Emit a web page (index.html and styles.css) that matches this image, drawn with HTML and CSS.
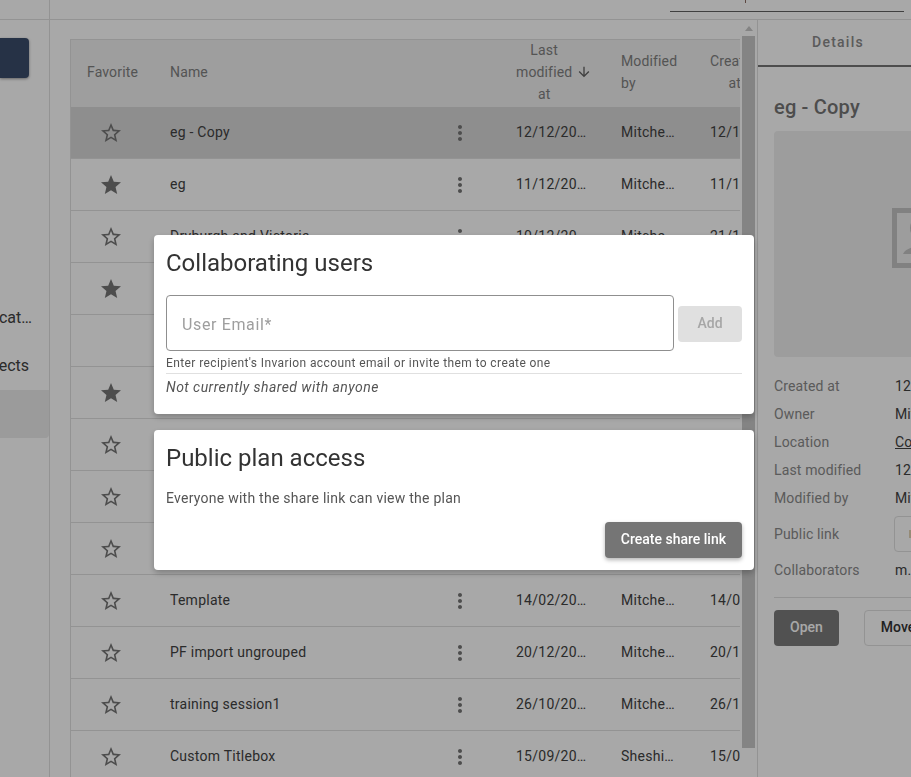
FILE: index.html
```html
<!DOCTYPE html>
<html lang="en">
<head>
  <meta charset="UTF-8" />
  <meta name="viewport" content="width=device-width, initial-scale=1" />
  <title>Plans</title>
  <link rel="stylesheet" href="styles.css">
</head>
<body>
  <svg class="icon-defs" aria-hidden="true">
    <symbol id="star" viewBox="0 0 24 24"><path d="M12 17.27L18.18 21l-1.64-7.03L22 9.24l-7.19-.61L12 2 9.19 8.63 2 9.24l5.46 4.73L5.82 21z"/></symbol>
    <symbol id="star-border" viewBox="0 0 24 24"><path d="M22 9.24l-7.19-.62L12 2 9.19 8.63 2 9.24l5.46 4.73L5.82 21 12 17.27 18.18 21l-1.63-7.03L22 9.24zM12 15.4l-3.76 2.27 1-4.28-3.32-2.88 4.38-.38L12 6.1l1.71 4.04 4.38.38-3.32 2.88 1 4.28L12 15.4z"/></symbol>
    <symbol id="more" viewBox="0 0 24 24"><path d="M12 8c1.1 0 2-.9 2-2s-.9-2-2-2-2 .9-2 2 .9 2 2 2zm0 2c-1.1 0-2 .9-2 2s.9 2 2 2 2-.9 2-2-.9-2-2-2zm0 6c-1.1 0-2 .9-2 2s.9 2 2 2 2-.9 2-2-.9-2-2-2z"/></symbol>
  </svg>

  <header class="topbar">
    <div class="topbar-side"></div>
    <div class="topbar-main">
      <div class="search-field"><span class="search-mark"></span></div>
    </div>
  </header>

  <div class="main">
    <nav class="sidebar">
      <div class="new-button"></div>
      <div class="side-item">Applicat…</div>
      <div class="side-item projects">Shared projects</div>
      <div class="side-item selected"></div>
    </nav>

    <section class="content">
      <div class="table-wrap">
        <table class="plans">
          <colgroup>
            <col class="col-fav"><col class="col-name"><col class="col-menu"><col class="col-last"><col class="col-by"><col class="col-created">
          </colgroup>
          <thead>
            <tr>
              <th>Favorite</th>
              <th>Name</th>
              <th></th>
              <th>
                <div class="sort-head">
                  <span class="stack center">Last modified at</span>
                  <svg class="sort-arrow" viewBox="0 0 24 24"><path d="M20 12l-1.41-1.41L13 16.17V4h-2v12.17l-5.58-5.59L4 12l8 8 8-8z"/></svg>
                </div>
              </th>
              <th><span class="stack">Modified by</span></th>
              <th><span class="stack center">Created at</span></th>
            </tr>
          </thead>
          <tbody>
            <tr class="selected">
              <td class="fav"><svg class="star"><use href="#star-border"/></svg></td>
              <td>eg - Copy</td>
              <td><svg class="more"><use href="#more"/></svg></td>
              <td>12/12/20…</td><td>Mitche…</td><td>12/12/20…</td>
            </tr>
            <tr>
              <td class="fav"><svg class="star"><use href="#star"/></svg></td>
              <td>eg</td>
              <td><svg class="more"><use href="#more"/></svg></td>
              <td>11/12/20…</td><td>Mitche…</td><td>11/12/20…</td>
            </tr>
            <tr>
              <td class="fav"><svg class="star"><use href="#star-border"/></svg></td>
              <td>Dryburgh and Victoria</td>
              <td><svg class="more"><use href="#more"/></svg></td>
              <td>10/12/20…</td><td>Mitche…</td><td>21/11/20…</td>
            </tr>
            <tr><td class="fav"><svg class="star"><use href="#star"/></svg></td><td colspan="5"></td></tr>
            <tr><td class="fav"></td><td colspan="5"></td></tr>
            <tr><td class="fav"><svg class="star"><use href="#star"/></svg></td><td colspan="5"></td></tr>
            <tr><td class="fav"><svg class="star"><use href="#star-border"/></svg></td><td colspan="5"></td></tr>
            <tr><td class="fav"><svg class="star"><use href="#star-border"/></svg></td><td colspan="5"></td></tr>
            <tr><td class="fav"><svg class="star"><use href="#star-border"/></svg></td><td colspan="5"></td></tr>
            <tr>
              <td class="fav"><svg class="star"><use href="#star-border"/></svg></td>
              <td>Template</td>
              <td><svg class="more"><use href="#more"/></svg></td>
              <td>14/02/20…</td><td>Mitche…</td><td>14/02/20…</td>
            </tr>
            <tr>
              <td class="fav"><svg class="star"><use href="#star-border"/></svg></td>
              <td>PF import ungrouped</td>
              <td><svg class="more"><use href="#more"/></svg></td>
              <td>20/12/20…</td><td>Mitche…</td><td>20/12/20…</td>
            </tr>
            <tr>
              <td class="fav"><svg class="star"><use href="#star-border"/></svg></td>
              <td>training session1</td>
              <td><svg class="more"><use href="#more"/></svg></td>
              <td>26/10/20…</td><td>Mitche…</td><td>26/10/20…</td>
            </tr>
            <tr>
              <td class="fav"><svg class="star"><use href="#star-border"/></svg></td>
              <td>Custom Titlebox</td>
              <td><svg class="more"><use href="#more"/></svg></td>
              <td>15/09/20…</td><td>Sheshi…</td><td>15/09/20…</td>
            </tr>
          </tbody>
        </table>
      </div>
    </section>

    <div class="scrollbar">
      <span class="scroll-arrow"></span>
      <div class="scroll-thumb"></div>
    </div>

    <aside class="details">
      <div class="tabs"><div class="tab">Details</div></div>
      <div class="details-body">
        <h3 class="details-title">eg - Copy</h3>
        <div class="preview">
          <svg class="preview-icon" viewBox="0 0 60 60">
            <path d="M0 0h60v60H0zM5 5v50h50V5z" fill-rule="evenodd"/>
            <circle cx="30" cy="20" r="12"/>
            <path d="M11 46c2-5 10-8 19-8s17 3 19 8z"/>
          </svg>
        </div>
        <dl class="meta">
          <dt>Created at</dt><dd>12/12/20…</dd>
          <dt>Owner</dt><dd>Mitche…</dd>
          <dt>Location</dt><dd><a href="#">Collab…</a></dd>
          <dt>Last modified</dt><dd>12/12/20…</dd>
          <dt>Modified by</dt><dd>Mitche…</dd>
          <dt class="tall">Public link</dt><dd class="tall"><span class="link-box"><span class="link-mark"></span></span></dd>
          <dt>Collaborators</dt><dd>m.…</dd>
        </dl>
        <div class="details-actions">
          <button class="btn primary">Open</button>
          <button class="btn outlined">Move</button>
        </div>
      </div>
    </aside>
  </div>

  <div class="overlay"></div>

  <div class="dialogs">
    <div class="dialog">
      <h2>Collaborating users</h2>
      <div class="email-row">
        <div class="email-input">User Email*</div>
        <button class="btn disabled">Add</button>
      </div>
      <p class="helper">Enter recipient's Invarion account email or invite them to create one</p>
      <p class="shared-note">Not currently shared with anyone</p>
    </div>
    <div class="dialog">
      <h2>Public plan access</h2>
      <p class="public-text">Everyone with the share link can view the plan</p>
      <div class="dialog-actions">
        <button class="btn primary raised">Create share link</button>
      </div>
    </div>
  </div>
</body>
</html>
```

FILE: styles.css
```css
* { box-sizing: border-box; }

html, body { height: 100%; }

body {
  margin: 0;
  overflow: hidden;
  background: #fff;
  color: #424242;
  font-family: Roboto, "Liberation Sans", sans-serif;
  font-size: 14px;
}

.icon-defs { display: none; }

.topbar {
  display: flex;
  height: 20px;
  border-bottom: 1px solid #e0e0e0;
}

.topbar-side { width: 50px; border-right: 1px solid #e0e0e0; }

.topbar-main {
  flex: 1;
  display: flex;
  justify-content: flex-end;
  padding-right: 7px;
}

.search-field {
  width: 234px;
  height: 12px;
  padding-left: 75px;
  border-bottom: 1px solid #616161;
}

.search-mark { display: block; width: 1px; height: 3px; background: #8d6e63; }

.main { display: flex; height: calc(100vh - 20px); }

.sidebar {
  flex: 0 0 50px;
  padding-top: 18px;
  border-right: 1px solid #e0e0e0;
  overflow: hidden;
}

.new-button {
  width: 29px;
  height: 40px;
  margin-bottom: 215px;
  background: #3b4c6b;
  border-radius: 0 4px 4px 0;
  box-shadow: 0 1px 3px rgba(0, 0, 0, 0.4);
}

.side-item {
  display: flex;
  justify-content: flex-end;
  align-items: center;
  height: 48px;
  padding-right: 17px;
  font-size: 16px;
  white-space: nowrap;
}

.side-item.projects { padding-right: 20px; }

.side-item.selected {
  margin-top: 1px;
  background: #ebebeb;
  border-radius: 0 0 4px 0;
}

.content { flex: 0 0 690px; padding: 19px 0 0 20px; overflow: hidden; }

.table-wrap {
  height: 800px;
  border-left: 1px solid #e0e0e0;
  border-top: 1px solid #e0e0e0;
  overflow: hidden;
}

.plans {
  table-layout: fixed;
  width: 743px;
  border-collapse: separate;
  border-spacing: 0;
  letter-spacing: 0.018em;
}

.col-fav { width: 83px; }
.col-name { width: 282px; }
.col-menu { width: 64px; }
.col-last { width: 105px; }
.col-by { width: 89px; }
.col-created { width: 120px; }

.plans th {
  height: 67px;
  padding: 0 0 4px 16px;
  background: #f0f0f0;
  color: #808080;
  font-weight: 400;
  line-height: 22px;
  letter-spacing: 0.01em;
  text-align: left;
}

.plans td {
  height: 52px;
  padding: 0 0 2px 16px;
  border-bottom: 1px solid #e0e0e0;
  white-space: nowrap;
  overflow: hidden;
}

.plans td.fav { padding: 1px 0 0 28px; }

.plans tr.selected td { background: #d8d8d8; }

.stack { display: block; width: min-content; margin: -2px 0; }
.stack.center { text-align: center; }

.sort-head { display: flex; align-items: center; gap: 4px; }

.sort-arrow { width: 16px; height: 16px; fill: #616161; flex: none; }

.star { display: block; width: 24px; height: 24px; fill: #757575; }

.more { display: block; width: 24px; height: 24px; margin: 2px 0 0 -4px; fill: #757575; }

.scrollbar { flex: 0 0 17px; padding-left: 2px; }

.scroll-arrow {
  display: block;
  width: 0;
  height: 0;
  margin: 6px 0 0 3px;
  border: 4px solid transparent;
  border-top: 0;
  border-bottom: 5px solid #c8c8c8;
}

.scroll-thumb { width: 13px; height: 712px; margin-top: 5px; background: #c8c8c8; }

.details {
  flex: 0 0 330px;
  border-left: 1px solid #e0e0e0;
}

.tabs { height: 47px; border-bottom: 2px solid #757575; }

.tab {
  width: 160px;
  line-height: 44px;
  text-align: center;
  color: #8a8a8a;
  font-weight: 500;
  letter-spacing: 0.09em;
}

.details-body { padding: 27px 16px 0; }

.details-title {
  margin: 0 0 11px;
  color: #757575;
  font-size: 20px;
  font-weight: 500;
  line-height: 26px;
  letter-spacing: 0.01em;
}

.preview {
  display: flex;
  align-items: center;
  justify-content: center;
  width: 296px;
  height: 226px;
  padding-bottom: 13px;
  background: #efefef;
  border-radius: 4px;
}

.preview-icon { width: 60px; height: 60px; fill: #c4c4c4; }

.meta {
  display: grid;
  grid-template-columns: 121px 1fr;
  margin: 15px 0 0;
  padding-bottom: 13px;
  border-bottom: 1px solid #e0e0e0;
  line-height: 28px;
  letter-spacing: 0.01em;
}

.meta dt { color: #8a8a8a; }
.meta dd { margin: 0; }
.meta a { color: inherit; }

.meta .tall { display: flex; align-items: center; height: 44px; }

.link-box {
  display: block;
  width: 100px;
  height: 36px;
  margin-left: -1px;
  padding: 13px 0 0 14px;
  border: 1px solid #e0e0e0;
  border-radius: 4px;
}

.link-mark { display: block; width: 2px; height: 8px; background: #e2d3b5; }

.details-actions { display: flex; gap: 25px; margin-top: 12px; }

.btn {
  height: 36px;
  padding: 0 16px 2px;
  border: 0;
  border-radius: 4px;
  font-family: inherit;
  font-size: 14px;
  font-weight: 500;
}

.btn.primary { background: #757575; color: #fff; }

.details-actions .btn.primary { background: #7c7c7c; }

.btn.raised { box-shadow: 0 2px 4px rgba(0, 0, 0, 0.3); }

.btn.outlined { background: #fff; border: 1px solid #e0e0e0; color: #333; }

.btn.disabled { width: 64px; margin-top: 2px; background: #e0e0e0; color: #a6a6a6; }

.overlay { position: fixed; inset: 0; background: rgba(0, 0, 0, 0.34); }

.dialogs {
  position: fixed;
  top: 235px;
  left: 154px;
  display: flex;
  flex-direction: column;
  gap: 16px;
  width: 600px;
}

.dialog {
  padding: 12px;
  background: #fff;
  border-radius: 4px;
  box-shadow: 0 3px 6px rgba(0, 0, 0, 0.25);
}

.dialog h2 {
  margin: 0 0 14px;
  color: #333;
  font-size: 24px;
  font-weight: 400;
  line-height: 32px;
}

.email-row { display: flex; align-items: center; gap: 4px; margin-top: 16px; }

.email-input {
  flex: 1;
  height: 56px;
  padding-left: 15px;
  border: 1px solid #8f8f8f;
  border-radius: 4px;
  color: #9e9e9e;
  font-size: 16px;
  line-height: 58px;
  letter-spacing: 0.04em;
}

.helper {
  margin: 5px 0 0;
  padding-bottom: 2px;
  border-bottom: 1px solid #e0e0e0;
  color: #555;
  font-size: 12px;
  line-height: 15px;
  letter-spacing: 0.033em;
}

.shared-note {
  margin: 3px 0 5px;
  color: #555;
  font-style: italic;
  line-height: 20px;
  letter-spacing: 0.032em;
}

.public-text {
  margin: 0;
  color: #555;
  line-height: 20px;
  letter-spacing: 0.018em;
}

.dialog-actions { display: flex; justify-content: flex-end; margin-top: 14px; }
```
